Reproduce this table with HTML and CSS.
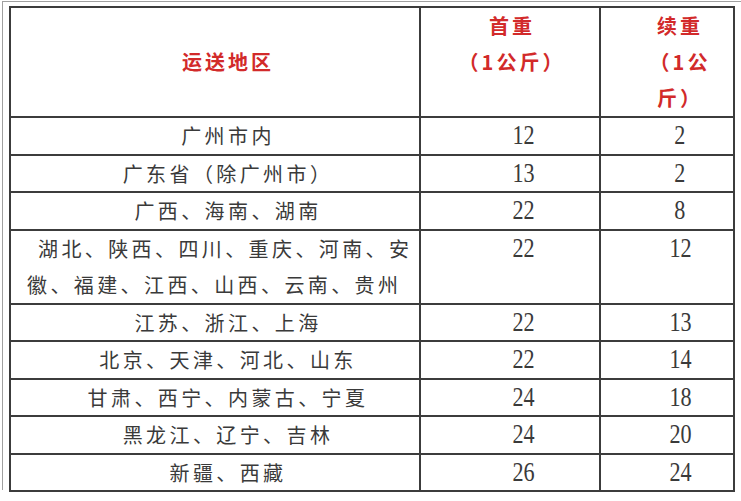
FILE: index.html
```html
<!DOCTYPE html>
<html lang="zh-CN">
<head>
<meta charset="utf-8">
<title>运费表</title>
<link rel="stylesheet" href="styles.css">
</head>
<body>
<div class="frame">
  <table class="fee">
    <colgroup>
      <col class="c-area">
      <col class="c-first">
      <col class="c-next">
    </colgroup>
    <tr class="h110">
      <th class="head head-area">运送地区</th>
      <th class="head head-first">首重<br>（1公斤）</th>
      <th class="head head-next">续重<br>（1公<br>斤）</th>
    </tr>
    <tr class="h38"><td class="area">广州市内</td><td class="num"><span class="d">12</span></td><td class="num"><span class="d">2</span></td></tr>
    <tr class="h37"><td class="area">广东省（除广州市）</td><td class="num"><span class="d">13</span></td><td class="num"><span class="d">2</span></td></tr>
    <tr class="h38"><td class="area">广西、海南、湖南</td><td class="num"><span class="d">22</span></td><td class="num"><span class="d">8</span></td></tr>
    <tr class="h74"><td class="area area-long"><span class="indent">湖北、陕西、四川、重庆、河南、安</span><br>徽、福建、江西、山西、云南、贵州</td><td class="num"><span class="d">22</span></td><td class="num"><span class="d">12</span></td></tr>
    <tr class="h37"><td class="area">江苏、浙江、上海</td><td class="num"><span class="d">22</span></td><td class="num"><span class="d">13</span></td></tr>
    <tr class="h38"><td class="area">北京、天津、河北、山东</td><td class="num"><span class="d">22</span></td><td class="num"><span class="d">14</span></td></tr>
    <tr class="h37"><td class="area">甘肃、西宁、内蒙古、宁夏</td><td class="num"><span class="d">24</span></td><td class="num"><span class="d">18</span></td></tr>
    <tr class="h38"><td class="area">黑龙江、辽宁、吉林</td><td class="num"><span class="d">24</span></td><td class="num"><span class="d">20</span></td></tr>
    <tr class="h37"><td class="area">新疆、西藏</td><td class="num"><span class="d">26</span></td><td class="num"><span class="d">24</span></td></tr>
  </table>
</div>
</body>
</html>
```
FILE: styles.css
```css
html, body {
  margin: 0;
  padding: 0;
  background: #ffffff;
}

body {
  width: 741px;
  height: 501px;
  overflow: hidden;
  font-family: "Noto Sans CJK SC", "Liberation Sans", sans-serif;
  color: #3a3a3a;
}

.frame {
  margin: 1px 0 0 2px;
  border-top: 1px solid #a0a0a0;
  border-left: 1px solid #a0a0a0;
  padding: 4px 0 0 6px;
  height: 484px;
}

.fee {
  table-layout: fixed;
  border-collapse: separate;
  border-spacing: 0;
  width: 726px;
  border-top: 2px solid #3c3c3c;
  border-left: 2px solid #3c3c3c;
}

.c-area { width: 410px; }
.c-first { width: 180px; }
.c-next { width: 134px; }

.fee th,
.fee td {
  border-right: 2px solid #3c3c3c;
  border-bottom: 2px solid #3c3c3c;
  padding: 0 0 0 26px;
  vertical-align: top;
  text-align: center;
  line-height: 35px;
  box-sizing: border-box;
  overflow: hidden;
  white-space: nowrap;
}

.fee .h110 > * { height: 110px; }
.fee .h38 > * { height: 38px; }
.fee .h37 > * { height: 37px; }
.fee .h74 > * { height: 74px; }

.fee .head {
  color: #d22a2a;
  font-weight: 700;
  font-size: 20px;
  letter-spacing: 3px;
  line-height: 36px;
}

.fee .head-area {
  vertical-align: middle;
}

.fee .head-first {
  padding-left: 4px;
}

.fee .area {
  font-size: 20px;
  letter-spacing: 3.4px;
  font-weight: 400;
}

.fee .area-long {
  text-align: left;
  padding-left: 16px;
  line-height: 36px;
}

.indent {
  padding-left: 11px;
}

.fee .num {
  font-family: "Liberation Serif", "Times New Roman", serif;
  font-size: 27px;
}

.d {
  display: inline-block;
  line-height: 35px;
  vertical-align: top;
  transform: scaleX(0.82);
  color: #3a3a3a;
}
```
